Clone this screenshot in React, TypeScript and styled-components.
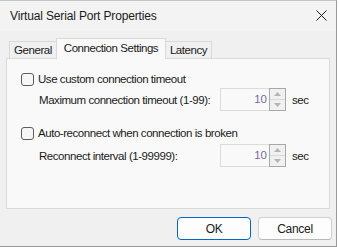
import React from "react";
import styled, { createGlobalStyle } from "styled-components";

const Global = createGlobalStyle`
  html, body { margin: 0; padding: 0; background: #ffffff; }
  body {
    font-family: "Liberation Sans", Arial, sans-serif;
    font-size: 11.5px;
    letter-spacing: -0.45px;
    color: #1a1a1a;
  }
  * { box-sizing: border-box; }
`;

const Window = styled.div`
  width: 337px;
  height: 247px;
  display: flex;
  flex-direction: column;
  background: #f0f0f0;
  border-top: 1px solid #c4c4c4;
  border-right: 1px solid #9a9a9a;
  border-bottom: 1px solid #9a9a9a;
`;

const TitleBar = styled.div`
  height: 30px;
  display: flex;
  align-items: center;
  justify-content: space-between;
  padding: 0 8px 1px 10px;
  background: #f3f3f3;
`;

const Title = styled.span`
  font-size: 12px;
  letter-spacing: -0.15px;
  color: #1a1a1a;
`;

const CloseButton = styled.span`
  width: 12px;
  height: 12px;
  display: flex;
  align-items: center;
  justify-content: center;
  margin-right: 1px;
`;

const Body = styled.div`
  flex: 1;
  display: flex;
  flex-direction: column;
  padding: 7px 4px 0 6px;
`;

const TabStrip = styled.div`
  height: 21px;
  display: flex;
  align-items: flex-end;
  padding-left: 3px;
  margin-bottom: -1px;
  position: relative;
  z-index: 1;
`;

const Tab = styled.div<{ $active?: boolean; $w: number; $side: "left" | "right" | "both" }>`
  width: ${(p) => p.$w}px;
  height: ${(p) => (p.$active ? 21 : 17)}px;
  margin-bottom: ${(p) => (p.$active ? 0 : 1)}px;
  display: flex;
  align-items: center;
  justify-content: center;
  padding-bottom: ${(p) => (p.$active ? 2 : 0)}px;
  background: ${(p) => (p.$active ? "#f9f9f9" : "#f0f0f0")};
  border-top: 1px solid #d9d9d9;
  border-left: ${(p) => (p.$side !== "right" ? "1px solid #d9d9d9" : "none")};
  border-right: ${(p) => (p.$side !== "left" ? "1px solid #d9d9d9" : "none")};
  color: #1a1a1a;
`;

const Panel = styled.div`
  height: 151px;
  width: 324px;
  background: #f9f9f9;
  border: 1px solid #d9d9d9;
  display: flex;
  flex-direction: column;
  gap: 14px;
  padding: 12px 0 0 14px;
`;

const Section = styled.div<{ $gap: number }>`
  display: flex;
  flex-direction: column;
  gap: ${(p) => p.$gap}px;
`;

const CheckRow = styled.label`
  height: 16px;
  display: flex;
  align-items: center;
  gap: 4px;
`;

const Box = styled.span`
  width: 13px;
  height: 13px;
  border: 1px solid #5c5c5c;
  border-radius: 3px;
  background: #f6f6f6;
`;

const FieldRow = styled.div`
  height: 23px;
  display: grid;
  grid-template-columns: 175px 66px auto;
  column-gap: 6px;
  align-items: center;
  padding-left: 18px;
`;

const FieldLabel = styled.span`
  white-space: nowrap;
`;

const Spin = styled.div`
  height: 23px;
  display: flex;
  border: 1px solid #dcdcdc;
  background: #f9f9f9;
`;

const SpinValue = styled.span`
  flex: 1;
  text-align: right;
  padding-right: 2px;
  line-height: 20px;
  color: #7a6c9c;
  letter-spacing: 0;
`;

const SpinButtons = styled.div`
  width: 17px;
  margin: -1px -1px -1px 0;
  display: flex;
  flex-direction: column;
  border: 1px solid #a8a8a8;
  background: #f0f0f0;
`;

const SpinButton = styled.span<{ $down?: boolean }>`
  flex: 1;
  display: flex;
  align-items: center;
  justify-content: center;
  border-top: ${(p) => (p.$down ? "1px solid #d8d8d8" : "none")};
`;

const Unit = styled.span``;

const Footer = styled.div`
  display: flex;
  justify-content: flex-end;
  gap: 7px;
  padding-top: 8px;
`;

const Button = styled.div<{ $primary?: boolean }>`
  width: 74px;
  height: 23px;
  display: flex;
  align-items: center;
  justify-content: center;
  background: #fdfdfd;
  border: 1px solid ${(p) => (p.$primary ? "#0067c0" : "#d0d0d0")};
  border-bottom-color: ${(p) => (p.$primary ? "#0067c0" : "#b8b8b8")};
  border-radius: 4px;
  font-size: 12px;
  letter-spacing: -0.3px;
  color: #1a1a1a;
`;

const Arrow = ({ down }: { down?: boolean }) => (
  <svg width="7" height="4" viewBox="0 0 7 4">
    <path d={down ? "M0 0H7L3.5 4Z" : "M0 4H7L3.5 0Z"} fill="#b4b4b4" />
  </svg>
);

const SpinBox = ({ value }: { value: string }) => (
  <Spin>
    <SpinValue>{value}</SpinValue>
    <SpinButtons>
      <SpinButton>
        <Arrow />
      </SpinButton>
      <SpinButton $down>
        <Arrow down />
      </SpinButton>
    </SpinButtons>
  </Spin>
);

export default function App() {
  return (
    <>
      <Global />
      <Window>
        <TitleBar>
          <Title>Virtual Serial Port Properties</Title>
          <CloseButton>
            <svg width="11" height="11" viewBox="0 0 11 11">
              <path d="M0.5 0.5L10.5 10.5M10.5 0.5L0.5 10.5" stroke="#1a1a1a" strokeWidth="1" />
            </svg>
          </CloseButton>
        </TitleBar>
        <Body>
          <TabStrip>
            <Tab $w={47} $side="left">General</Tab>
            <Tab $w={110} $side="both" $active>
              Connection Settings
            </Tab>
            <Tab $w={46} $side="right">Latency</Tab>
          </TabStrip>
          <Panel>
            <Section $gap={1}>
              <CheckRow>
                <Box />
                Use custom connection timeout
              </CheckRow>
              <FieldRow>
                <FieldLabel>Maximum connection timeout (1-99):</FieldLabel>
                <SpinBox value="10" />
                <Unit>sec</Unit>
              </FieldRow>
            </Section>
            <Section $gap={3}>
              <CheckRow>
                <Box />
                Auto-reconnect when connection is broken
              </CheckRow>
              <FieldRow>
                <FieldLabel>Reconnect interval (1-99999):</FieldLabel>
                <SpinBox value="10" />
                <Unit>sec</Unit>
              </FieldRow>
            </Section>
          </Panel>
          <Footer>
            <Button $primary>OK</Button>
            <Button>Cancel</Button>
          </Footer>
        </Body>
      </Window>
    </>
  );
}
